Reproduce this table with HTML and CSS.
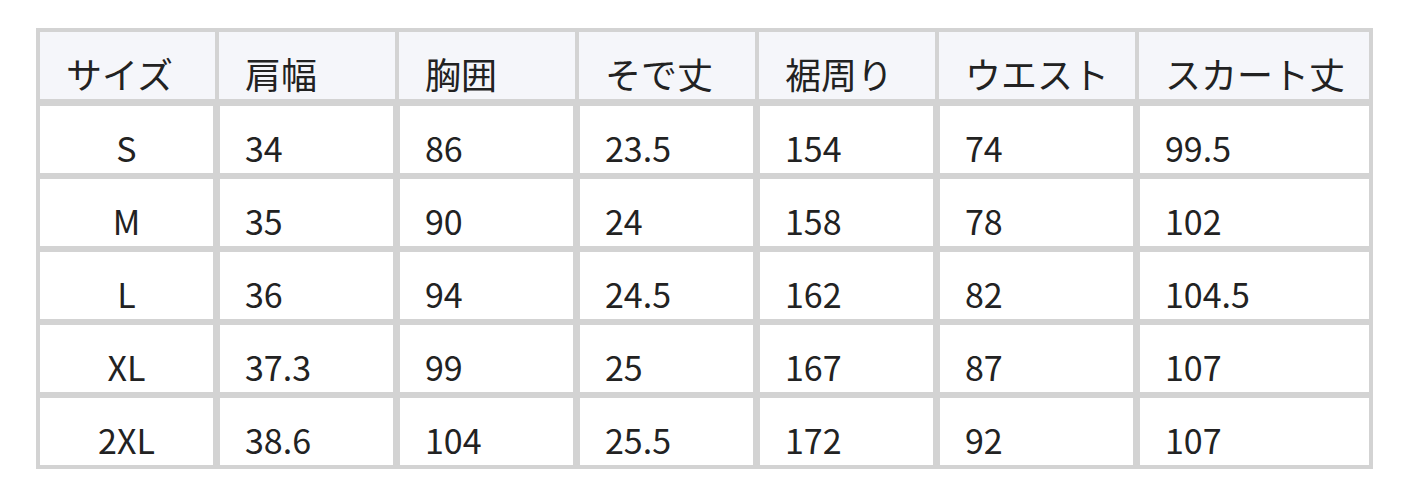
FILE: index.html
```html
<!DOCTYPE html>
<html lang="ja">
<head>
<meta charset="utf-8">
<title>サイズ表</title>
<link rel="stylesheet" href="styles.css">
</head>
<body>
<table class="size-table">
  <colgroup>
    <col class="c1"><col class="c2"><col class="c3"><col class="c4"><col class="c5"><col class="c6"><col class="c7">
  </colgroup>
  <thead>
    <tr>
      <th>サイズ</th><th>肩幅</th><th>胸囲</th><th>そで丈</th><th>裾周り</th><th>ウエスト</th><th>スカート丈</th>
    </tr>
  </thead>
  <tbody>
    <tr><td>S</td><td>34</td><td>86</td><td>23.5</td><td>154</td><td>74</td><td>99.5</td></tr>
    <tr><td>M</td><td>35</td><td>90</td><td>24</td><td>158</td><td>78</td><td>102</td></tr>
    <tr><td>L</td><td>36</td><td>94</td><td>24.5</td><td>162</td><td>82</td><td>104.5</td></tr>
    <tr><td>XL</td><td>37.3</td><td>99</td><td>25</td><td>167</td><td>87</td><td>107</td></tr>
    <tr><td>2XL</td><td>38.6</td><td>104</td><td>25.5</td><td>172</td><td>92</td><td>107</td></tr>
  </tbody>
</table>
</body>
</html>
```

FILE: styles.css
```css
html, body {
  margin: 0;
  background: #ffffff;
}

body {
  padding: 28px 35px 0 36px;
  font-family: "Noto Sans CJK JP", "Noto Sans", sans-serif;
  color: #222222;
}

.size-table {
  border-collapse: separate;
  border-spacing: 0;
  table-layout: fixed;
  width: 1337px;
  border: 4px solid #d3d3d3;
  font-size: 34px;
}

.c1 { width: 179px; }
.c2, .c3, .c4, .c5 { width: 180px; }
.c6 { width: 200px; }
.c7 { width: 230px; }

.size-table th {
  background: #f5f6fa;
  font-weight: 400;
  font-size: 36px;
  text-align: left;
  padding: 16px 0 0 26px;
  line-height: 51px;
  border-right: 4px solid #d3d3d3;
  border-bottom: 7px solid #d3d3d3;
  white-space: nowrap;
}

.size-table th:last-child {
  border-right: none;
}

.size-table td {
  text-align: left;
  padding: 17px 0 0 25px;
  line-height: 50px;
  border-left: 1px solid #d3d3d3;
  border-right: 6px solid #d3d3d3;
  border-bottom: 6px solid #d3d3d3;
  white-space: nowrap;
}

.size-table td:first-child {
  border-left: none;
  text-align: center;
  padding-left: 0;
}

.size-table td:last-child {
  border-right: none;
}

.size-table tbody tr:last-child td {
  border-bottom: none;
}
```
